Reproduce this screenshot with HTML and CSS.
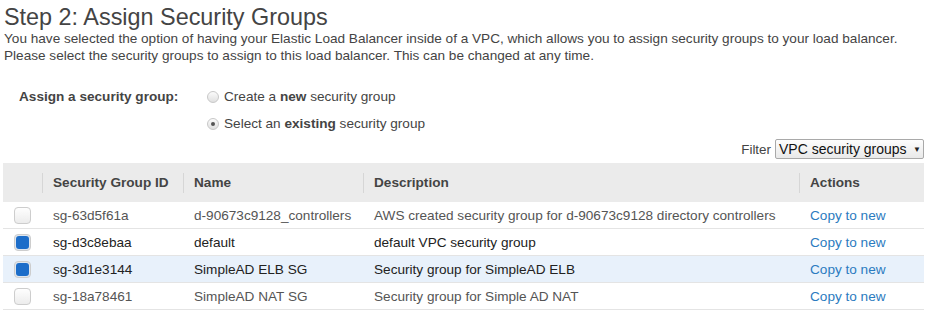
FILE: index.html
```html
<!DOCTYPE html>
<html>
  <head>
    <meta charset="UTF-8" />
    <title>Step 2: Assign Security Groups</title>
    <link rel="stylesheet" href="styles.css">
  </head>
  <body>
    <div class="page">
      <h1>Step 2: Assign Security Groups</h1>
      <p class="intro">
        You have selected the option of having your Elastic Load Balancer inside of a VPC, which allows you to assign security groups to your load balancer.<br />
        Please select the security groups to assign to this load balancer. This can be changed at any time.
      </p>

      <div class="assign">
        <div class="assign-label">Assign a security group:</div>
        <div class="assign-options">
          <label class="radio-row"><span class="radio"></span><span>Create a <b>new</b> security group</span></label>
          <label class="radio-row"><span class="radio checked"></span><span>Select an <b>existing</b> security group</span></label>
        </div>
      </div>

      <div class="filter-row">
        <span class="filter-label">Filter</span>
        <div class="select-box">VPC security groups <span class="arrow">▼</span></div>
      </div>

      <table class="sg-table">
        <colgroup>
          <col style="width: 39px" />
          <col style="width: 141px" />
          <col style="width: 180px" />
          <col style="width: 436px" />
          <col />
        </colgroup>
        <thead>
          <tr>
            <th></th>
            <th><div class="th-label">Security Group ID</div></th>
            <th><div class="th-label">Name</div></th>
            <th><div class="th-label">Description</div></th>
            <th><div class="th-label">Actions</div></th>
          </tr>
        </thead>
        <tbody>
          <tr>
            <td><span class="check"></span></td>
            <td>sg-63d5f61a</td>
            <td>d-90673c9128_controllers</td>
            <td>AWS created security group for d-90673c9128 directory controllers</td>
            <td><a href="#">Copy to new</a></td>
          </tr>
          <tr class="selected">
            <td><span class="check checked"></span></td>
            <td>sg-d3c8ebaa</td>
            <td>default</td>
            <td>default VPC security group</td>
            <td><a href="#">Copy to new</a></td>
          </tr>
          <tr class="selected hover">
            <td><span class="check checked"></span></td>
            <td>sg-3d1e3144</td>
            <td>SimpleAD ELB SG</td>
            <td>Security group for SimpleAD ELB</td>
            <td><a href="#">Copy to new</a></td>
          </tr>
          <tr>
            <td><span class="check"></span></td>
            <td>sg-18a78461</td>
            <td>SimpleAD NAT SG</td>
            <td>Security group for Simple AD NAT</td>
            <td><a href="#">Copy to new</a></td>
          </tr>
        </tbody>
      </table>
    </div>
  </body>
</html>
```

FILE: styles.css
```css
body {
  font-family: "Liberation Sans", Arial, sans-serif;
  font-size: 13.6px;
  color: #444;
  background-color: #fff;
  margin: 0;
  padding: 0;
}

.page {
  padding: 4px 9px 0 3px;
}

h1 {
  font-size: 23.4px;
  font-weight: normal;
  line-height: 26px;
  margin: 0;
  padding-left: 1px;
  color: #444;
}

.intro {
  margin: 0;
  padding-left: 1px;
  line-height: 17px;
}

.assign {
  display: flex;
  margin-top: 19px;
}

.assign-label {
  width: 188px;
  padding-left: 16px;
  font-weight: bold;
  line-height: 27px;
}

.radio-row {
  display: flex;
  align-items: center;
  height: 27px;
  gap: 5px;
}

.radio {
  width: 10px;
  height: 10px;
  border: 1px solid #c8c8c8;
  border-radius: 50%;
  background: linear-gradient(#fbfbfb, #e0e0e0);
  display: inline-flex;
  align-items: center;
  justify-content: center;
}

.radio.checked::after {
  content: "";
  width: 4px;
  height: 4px;
  border-radius: 50%;
  background-color: #555;
}

.filter-row {
  display: flex;
  justify-content: flex-end;
  align-items: center;
  gap: 4px;
  margin-top: 2px;
}

.filter-label {
  font-size: 13.4px;
}

.select-box {
  display: flex;
  align-items: center;
  justify-content: space-between;
  width: 142px;
  height: 18px;
  padding: 0 2px 0 3px;
  border: 1px solid #a9a9a9;
  border-radius: 2px;
  background: linear-gradient(#fdfdfd, #e9e9e9);
  font-size: 14px;
  color: #111;
}

.select-box .arrow {
  font-size: 8px;
  color: #222;
}

.sg-table {
  width: 921px;
  margin-top: 4px;
  border-collapse: collapse;
  table-layout: fixed;
}

.sg-table th {
  height: 39px;
  padding: 0;
  background-color: #ebebeb;
  text-align: left;
  font-weight: bold;
  color: #444;
}

.th-label {
  border-left: 1px solid #d6d6d6;
  padding-left: 10px;
  line-height: 20px;
}

.sg-table td {
  height: 26px;
  padding: 0 0 0 11px;
  border-bottom: 1px solid #e4e4e4;
  color: #555;
  white-space: nowrap;
}

.sg-table tr.selected td {
  color: #222;
}

.sg-table tr.hover td {
  background-color: #e8f1fb;
}

.sg-table a {
  color: #2b7bc0;
  text-decoration: none;
}

.check {
  display: block;
  width: 13px;
  height: 13px;
  padding: 1px;
  border: 1px solid #cdcdcd;
  border-radius: 4px;
  background: linear-gradient(#fefefe, #ececec);
}

.check.checked {
  background: #dfe6ee;
}

.check.checked::after {
  content: "";
  display: block;
  width: 13px;
  height: 13px;
  border-radius: 3px;
  background-color: #1c6dc9;
}
```
